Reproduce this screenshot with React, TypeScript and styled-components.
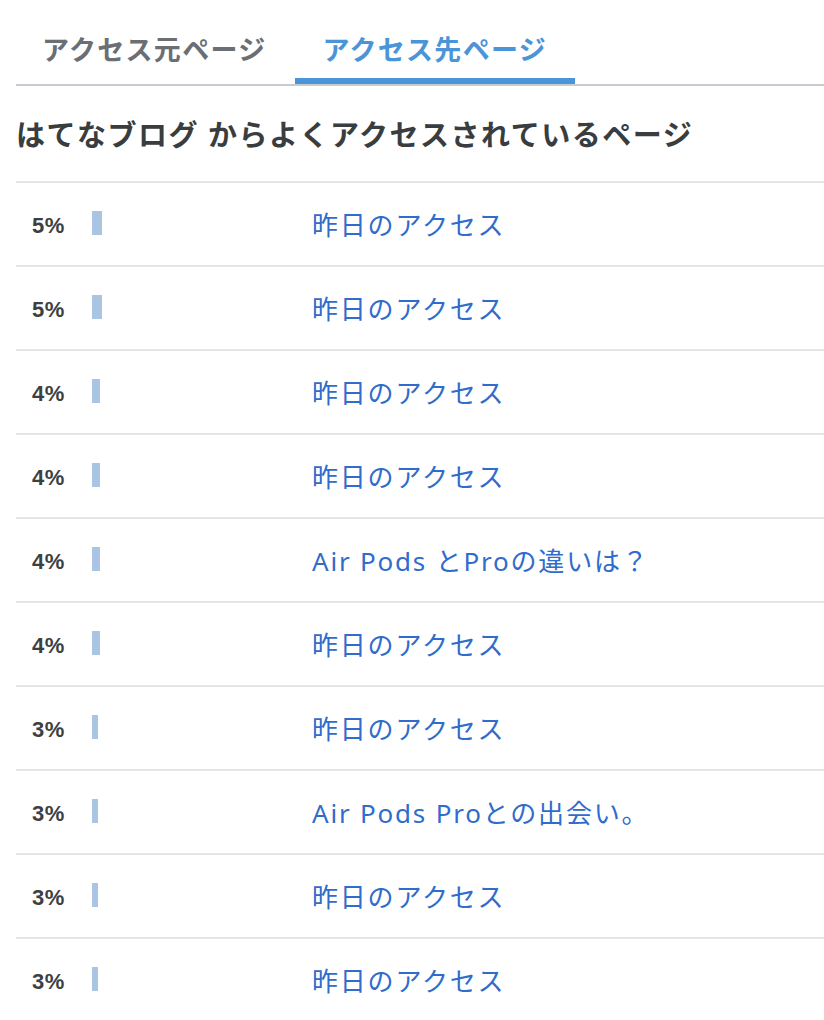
import { FC } from 'react';
import styled, { createGlobalStyle } from 'styled-components';

const GlobalStyle = createGlobalStyle`
    body {
        margin: 0;
        background: #fff;
        font-family: "Noto Sans", "Noto Sans CJK JP", sans-serif;
    }
`;

interface IAccessRow {
    percent: number;
    title: string;
}

const rows: IAccessRow[] = [
    { percent: 5, title: '昨日のアクセス' },
    { percent: 5, title: '昨日のアクセス' },
    { percent: 4, title: '昨日のアクセス' },
    { percent: 4, title: '昨日のアクセス' },
    { percent: 4, title: 'Air Pods とProの違いは？' },
    { percent: 4, title: '昨日のアクセス' },
    { percent: 3, title: '昨日のアクセス' },
    { percent: 3, title: 'Air Pods Proとの出会い。' },
    { percent: 3, title: '昨日のアクセス' },
    { percent: 3, title: '昨日のアクセス' },
];

const Page = styled.div`
    padding-left: 16px;
`;

const Tabs = styled.div`
    display: flex;
    border-bottom: 2px solid #c6ccd2;
`;

const Tab = styled.div<{ $active?: boolean }>`
    box-sizing: border-box;
    height: 84px;
    padding: 18px 28px 0;
    margin-left: ${(p) => (p.$active ? '0' : '-2px')};
    display: flex;
    align-items: center;
    font-size: 27px;
    font-weight: 700;
    letter-spacing: 1.3px;
    color: ${(p) => (p.$active ? '#4a94d8' : '#6b6e72')};
    border-bottom: 6px solid ${(p) => (p.$active ? '#4a94d8' : 'transparent')};
    cursor: pointer;
`;

const Heading = styled.h2`
    margin: 0;
    padding: 29px 0 26px;
    font-size: 29px;
    line-height: 40px;
    font-weight: 700;
    letter-spacing: 1.5px;
    color: #3a3d40;
`;

const List = styled.ul`
    margin: 0;
    padding: 0;
    list-style: none;
`;

const Row = styled.li`
    box-sizing: border-box;
    height: 84px;
    padding-left: 16px;
    border-top: 2px solid #e2e6e9;
    display: grid;
    grid-template-columns: 60px 220px 1fr;
    align-items: center;
`;

const Percent = styled.span`
    font-family: "Liberation Sans", "Noto Sans CJK JP", sans-serif;
    font-size: 22px;
    font-weight: 700;
    letter-spacing: 0.5px;
    color: #3d3f42;
    padding-top: 4px;
`;

const Bar = styled.span`
    display: block;
    height: 24px;
    margin-top: -2px;
    background: #aac4e4;
`;

const Link = styled.a`
    font-size: 26px;
    letter-spacing: 1.8px;
    color: #2f6ccb;
    text-decoration: none;
    white-space: nowrap;
`;

const App: FC = () => {
    return (
        <Page>
            <GlobalStyle />
            <Tabs>
                <Tab>アクセス元ページ</Tab>
                <Tab $active>アクセス先ページ</Tab>
            </Tabs>
            <Heading>はてなブログ からよくアクセスされているページ</Heading>
            <List>
                {rows.map((r, i) => (
                    <Row key={i}>
                        <Percent>{r.percent}%</Percent>
                        <div>
                            <Bar style={{ width: `${r.percent * 2}px` }} />
                        </div>
                        <Link href="#">{r.title}</Link>
                    </Row>
                ))}
            </List>
        </Page>
    );
};

export default App;
